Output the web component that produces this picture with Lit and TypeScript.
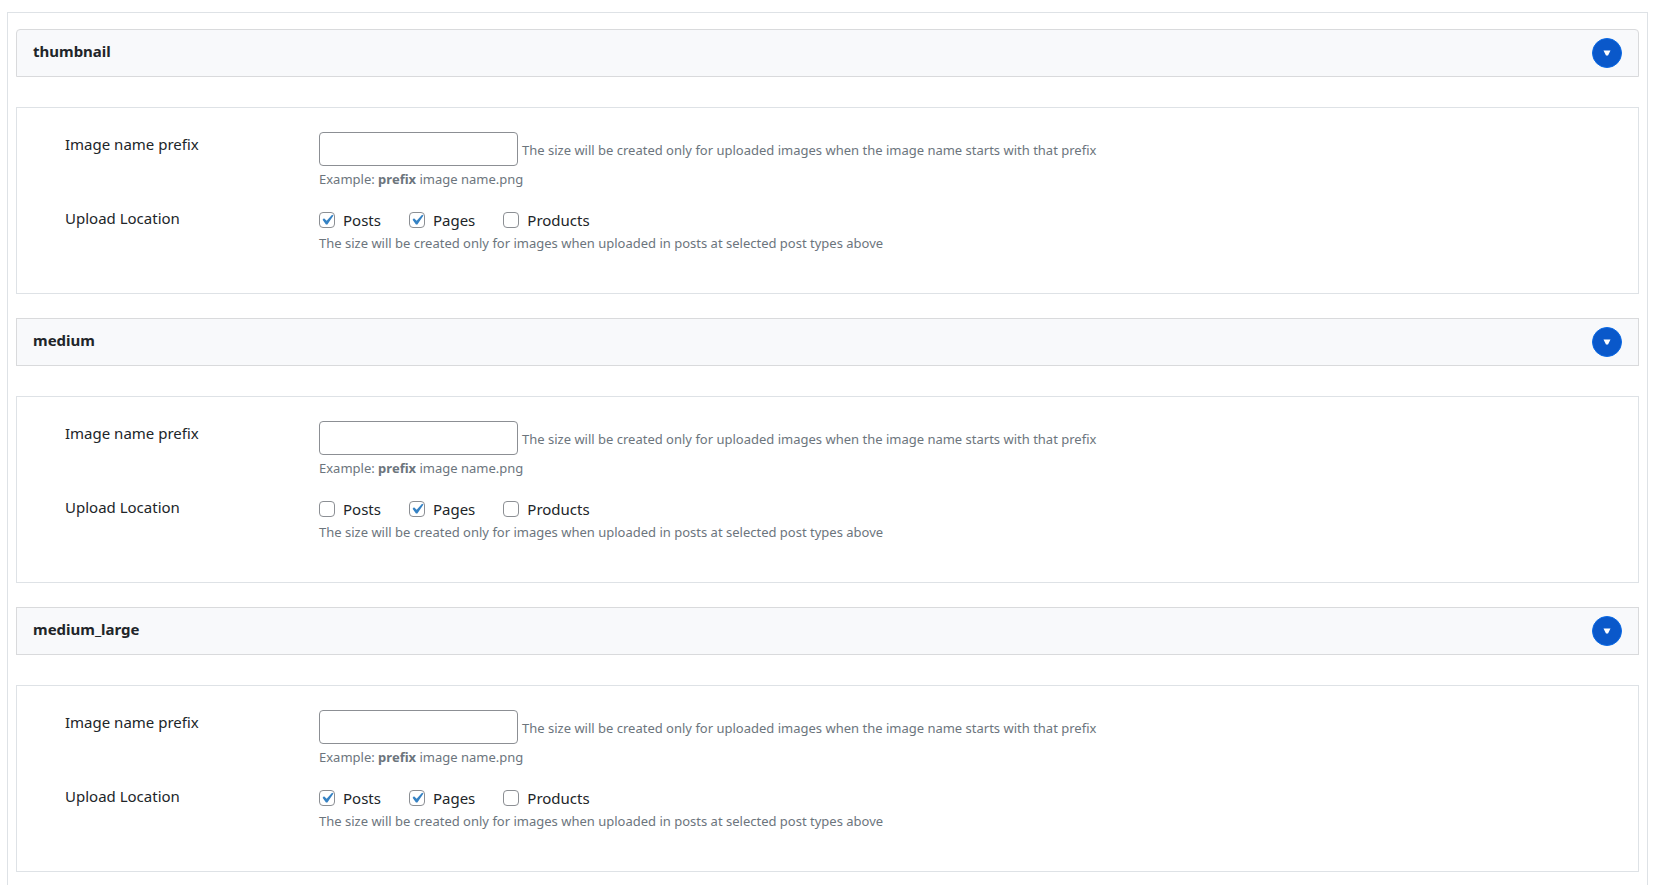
import { LitElement, html, css } from "lit";
import { customElement, property, state } from "lit/decorators.js";

interface ImageSize {
  name: string;
  prefix: string;
  locations: string[];
}

const LOCATIONS = ["Posts", "Pages", "Products"];

@customElement("size-panel")
class SizePanel extends LitElement {
  @property({ attribute: false }) size!: ImageSize;
  @state() private open = true;

  static styles = css`
    :host {
      display: block;
    }
    .header {
      display: flex;
      justify-content: space-between;
      align-items: flex-start;
      padding: 8px 16px;
      border: 1px solid #d9dadc;
      background: #f8f9fb;
    }
    :host([first]) .header {
      border-radius: 4px 4px 0 0;
    }
    .title {
      margin: 0;
      font-size: 15px;
      line-height: 26px;
      font-weight: 700;
    }
    .toggle {
      display: grid;
      place-items: center;
      width: 30px;
      height: 30px;
      padding: 0;
      border: 1px solid #0a6ae6;
      border-radius: 50%;
      background: #0a58ca;
      cursor: pointer;
    }
    .arrow {
      display: block;
      width: 8px;
      height: 6px;
      fill: #fff;
    }
    .body {
      display: grid;
      row-gap: 17px;
      margin-top: 30px;
      padding: 24px 48px 40px;
      border: 1px solid #dee2e6;
    }
    .row {
      display: grid;
      grid-template-columns: 254px 1fr;
    }
    .label {
      font-size: 15px;
      line-height: 24px;
    }
    .line {
      display: flex;
      align-items: baseline;
      gap: 4px;
    }
    .text {
      box-sizing: border-box;
      width: 199px;
      height: 34px;
      padding: 0 8px;
      border: 1px solid #8c8f94;
      border-radius: 4px;
      background: #fff;
      color: #2c3338;
      font: 15px "Noto Sans", sans-serif;
    }
    .help {
      margin: 0;
      color: #6c757d;
      font-size: 13px;
      line-height: 20px;
    }
    .example {
      margin-top: 3px;
    }
    .options {
      display: flex;
      gap: 28px;
      padding: 2px 0 1px;
    }
    .option {
      display: flex;
      align-items: center;
      gap: 8px;
      font-size: 15px;
      line-height: 24px;
    }
    .check {
      appearance: none;
      box-sizing: border-box;
      width: 16px;
      height: 16px;
      margin: 0;
      border: 1px solid #8c8f94;
      border-radius: 4px;
      background: #fff;
    }
    .check:checked {
      background: #fff
        url("data:image/svg+xml,%3Csvg xmlns='http://www.w3.org/2000/svg' viewBox='0 0 20 20'%3E%3Cpath d='M14.83 4.89l1.34.94-5.81 8.38H9.02L5.78 9.67l1.34-1.25 2.57 2.4z' fill='%233582c4'/%3E%3C/svg%3E")
        center / 21px 21px no-repeat;
    }
  `;

  render() {
    const { name, prefix, locations } = this.size;
    return html`
      <div class="header">
        <h2 class="title">${name}</h2>
        <button
          class="toggle"
          type="button"
          aria-label="Toggle ${name}"
          aria-expanded=${this.open}
          @click=${() => (this.open = !this.open)}
        >
          <svg class="arrow" viewBox="0 0 8 6"><path d="M0.5 0.5H7.5L5 5.5H3Z" /></svg>
        </button>
      </div>
      ${this.open
        ? html`<div class="body">
            <div class="row">
              <label class="label" for="prefix">Image name prefix</label>
              <div>
                <div class="line">
                  <input class="text" id="prefix" type="text" .value=${prefix} />
                  <span class="help"
                    >The size will be created only for uploaded images when the image name starts with that prefix</span
                  >
                </div>
                <p class="help example">Example: <b>prefix</b> image name.png</p>
              </div>
            </div>
            <div class="row" role="group" aria-labelledby="location">
              <span class="label" id="location">Upload Location</span>
              <div>
                <div class="options">
                  ${LOCATIONS.map(
                    (l) => html`<label class="option"
                      ><input class="check" type="checkbox" .checked=${locations.includes(l)} />${l}</label
                    >`
                  )}
                </div>
                <p class="help">The size will be created only for images when uploaded in posts at selected post types above</p>
              </div>
            </div>
          </div>`
        : null}
    `;
  }
}

@customElement("app-root")
class AppRoot extends LitElement {
  private sizes: ImageSize[] = [
    { name: "thumbnail", prefix: "", locations: ["Posts", "Pages"] },
    { name: "medium", prefix: "", locations: ["Pages"] },
    { name: "medium_large", prefix: "", locations: ["Posts", "Pages"] },
  ];

  static styles = css`
    :host {
      display: flow-root;
      background: #fff;
      color: #212529;
      font-family: "Noto Sans", "Open Sans", sans-serif;
    }
    .list {
      display: grid;
      row-gap: 24px;
      margin: 12px 7px 0;
      padding: 16px 8px;
      border: 1px solid #dee2e6;
      border-bottom: 0;
    }
  `;

  render() {
    return html`<main class="list">
      ${this.sizes.map((s, i) => html`<size-panel .size=${s} ?first=${i === 0}></size-panel>`)}
    </main>`;
  }
}
